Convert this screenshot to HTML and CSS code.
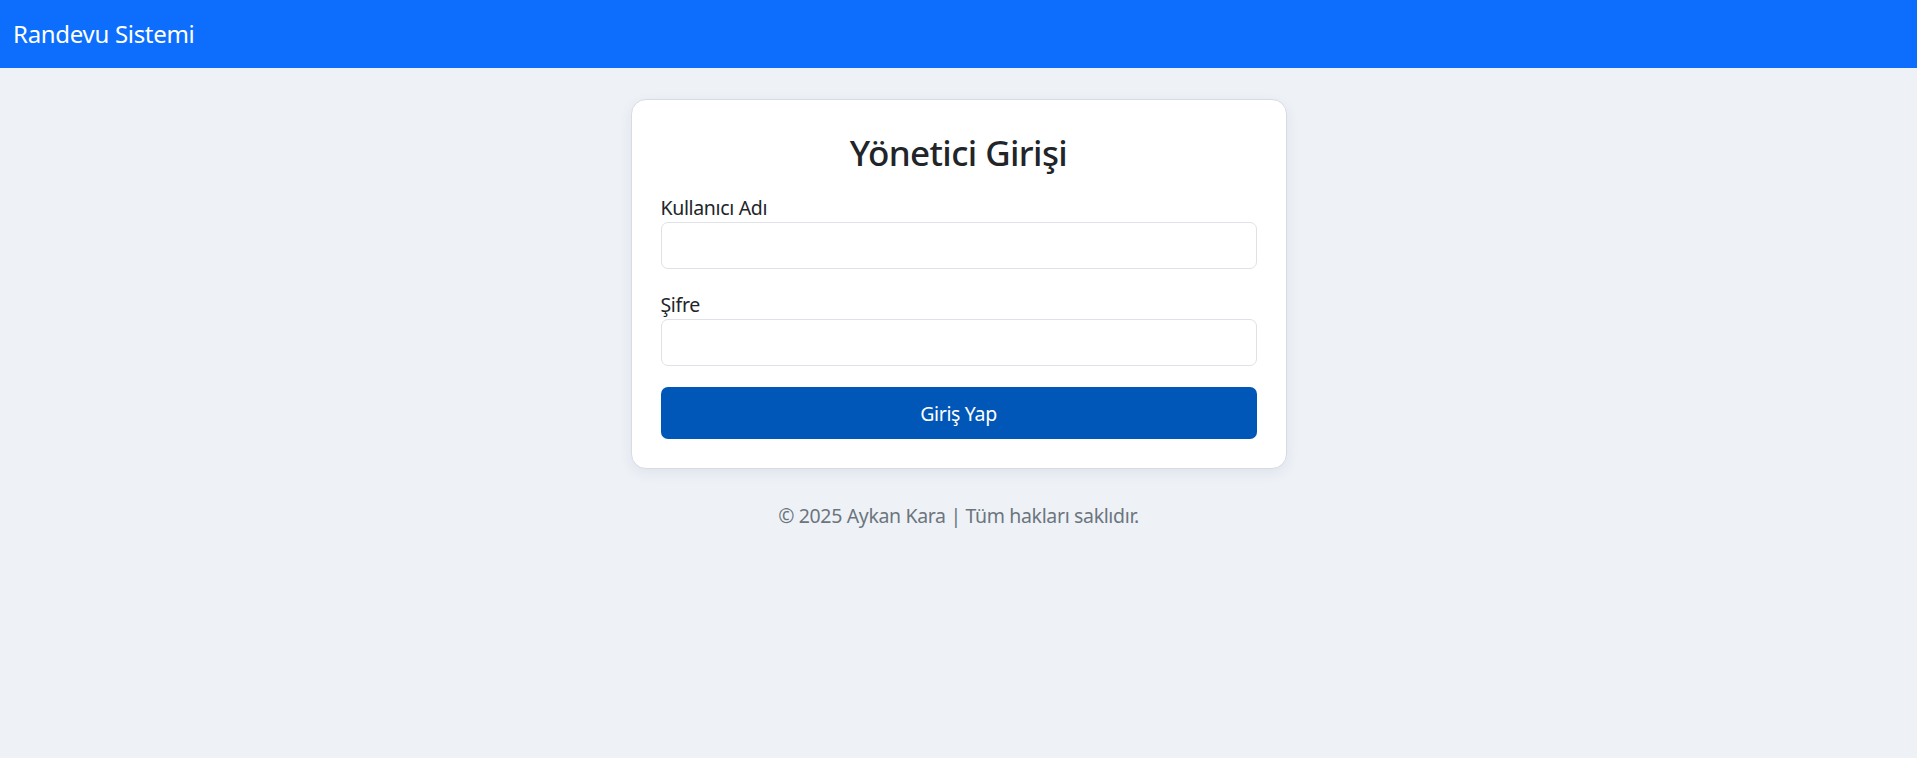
FILE: index.html
```html
<!DOCTYPE html>
<html lang="tr">
<head>
<meta charset="utf-8">
<title>Yönetici Girişi - Randevu Sistemi</title>
<link rel="stylesheet" href="styles.css">
</head>
<body>
<nav class="navbar">
  <a class="brand" href="#">Randevu Sistemi</a>
</nav>
<main class="page">
  <div class="card">
    <h2 class="card-title">Yönetici Girişi</h2>
    <form class="login-form">
      <div class="field">
        <label for="username">Kullanıcı Adı</label>
        <input id="username" class="input" type="text">
      </div>
      <div class="field">
        <label for="password">Şifre</label>
        <input id="password" class="input" type="password">
      </div>
      <button type="button" class="btn">Giriş Yap</button>
    </form>
  </div>
  <footer class="footer">© 2025 Aykan Kara | Tüm hakları saklıdır.</footer>
</main>
</body>
</html>
```
FILE: styles.css
```css
html, body {
  margin: 0;
  padding: 0;
}
body {
  background: #eef2f7;
  font-family: "Noto Sans", "Open Sans", "DejaVu Sans", sans-serif;
  font-size: 19.5px;
  letter-spacing: -0.35px;
  color: #212529;
}
.navbar {
  height: 68px;
  background: #0d6efd;
  display: flex;
  align-items: center;
  padding: 0 13px;
}
.brand {
  color: #ffffff;
  text-decoration: none;
  font-size: 24px;
  line-height: 30px;
  letter-spacing: -0.3px;
}
.page {
  display: flex;
  flex-direction: column;
  align-items: center;
  padding-top: 31px;
}
.card {
  width: 656px;
  box-sizing: border-box;
  background: #ffffff;
  border: 1px solid #d8dce2;
  border-radius: 15px;
  padding: 29px;
  box-shadow: 0 4px 14px rgba(20, 40, 80, 0.07);
}
.card-title {
  margin: 0 0 17px;
  font-size: 35px;
  font-weight: 500;
  line-height: 47px;
  letter-spacing: -0.6px;
  text-align: center;
}
.field {
  margin-bottom: 21px;
}
.field label {
  display: block;
  line-height: 29px;
}
.input {
  display: block;
  width: 100%;
  height: 47px;
  box-sizing: border-box;
  border: 1px solid #dee2e6;
  border-radius: 7px;
  background: #ffffff;
  font: inherit;
  padding: 0 14px;
}
.btn {
  display: block;
  width: 100%;
  height: 52px;
  border: none;
  border-radius: 7px;
  background: #0057b7;
  color: #ffffff;
  font: inherit;
  letter-spacing: -0.35px;
  cursor: pointer;
}
.footer {
  margin-top: 32px;
  line-height: 29px;
  color: #6c757d;
}
```
